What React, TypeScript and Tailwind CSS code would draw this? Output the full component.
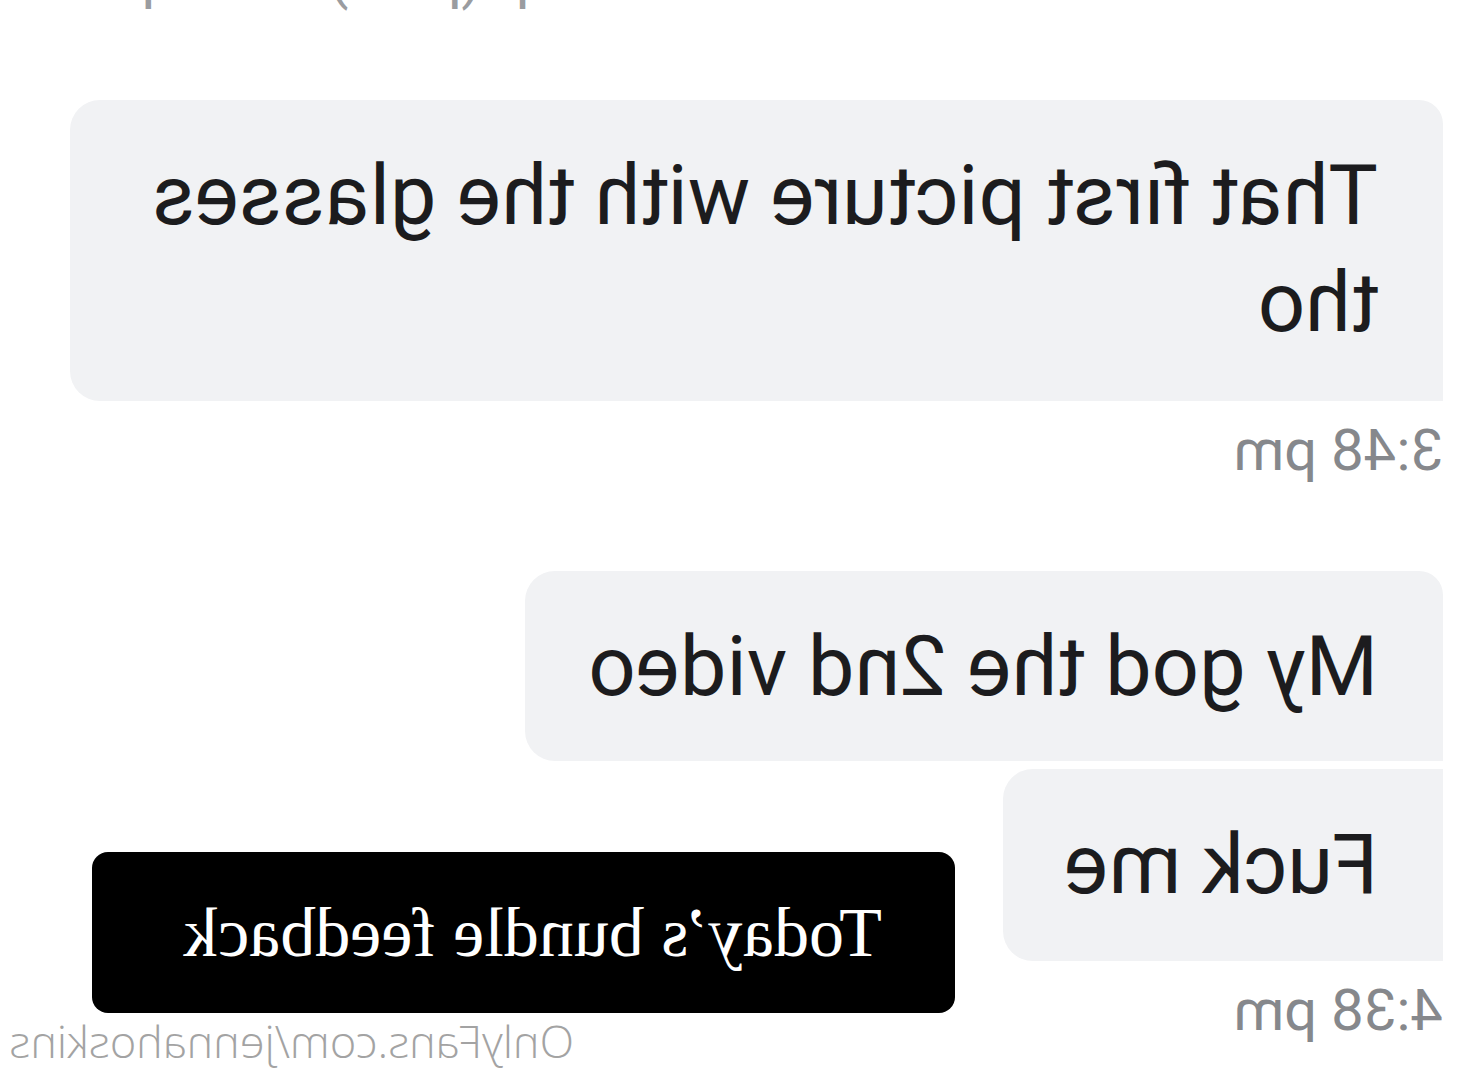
const roboto = { fontFamily: 'Roboto, "Liberation Sans", sans-serif' };

function Bubble({ text, corners, className }: { text: string; corners: string; className: string }) {
    return (
        <div className={`bg-[#f1f2f4] px-[65px] text-[83px] leading-[107px] text-[#1c1c1e] ${corners} ${className}`}>
            {text}
        </div>
    );
}

function Time({ label }: { label: string }) {
    return <div className="mt-[14px] text-[58px] leading-[70px] text-[#86888c]">{label}</div>;
}

export default function App() {
    return (
        <div className="relative w-[1460px] h-[1079px] overflow-hidden bg-white -scale-x-100" style={roboto}>
            <div className="flex flex-col items-start pl-[17px]">
                <div className="-mt-[58px] self-end pr-[40px] text-[59px] leading-[70px] text-[#9a9ca0]">
                    Tip (paid) · 3:47 pm ·
                </div>
                <Bubble
                    text="That first picture with the glasses tho"
                    corners="rounded-tl-[24px] rounded-r-[30px]"
                    className="mt-[88px] w-[1373px] pt-[42px] pb-[45px]"
                />
                <Time label="3:48 pm" />
                <Bubble
                    text="My god the 2nd video"
                    corners="rounded-tl-[24px] rounded-r-[30px]"
                    className="mt-[86px] w-[918px] whitespace-nowrap pt-[42px] pb-[41px]"
                />
                <Bubble
                    text="Fuck me"
                    corners="rounded-r-[30px]"
                    className="mt-[8px] w-[440px] whitespace-nowrap pt-[42px] pb-[43px]"
                />
                <Time label="4:38 pm" />
            </div>

            {/* caption overlay */}
            <div className="absolute left-[505px] top-[852px] flex h-[161px] w-[863px] items-center justify-center rounded-[16px] bg-black">
                <span className="pr-[18px] text-[70px] leading-none text-white" style={{ fontFamily: '"Liberation Serif", serif' }}>
                    Today’s bundle feedback
                </span>
            </div>

            {/* watermark */}
            <div
                className="absolute left-[886px] top-[1012px] text-[45px] font-light leading-[58px] text-[#a3a3a3]"
                style={{ fontFamily: '"Open Sans", "DejaVu Sans", sans-serif' }}
            >
                OnlyFans.com/jennahoskins
            </div>
        </div>
    );
}
